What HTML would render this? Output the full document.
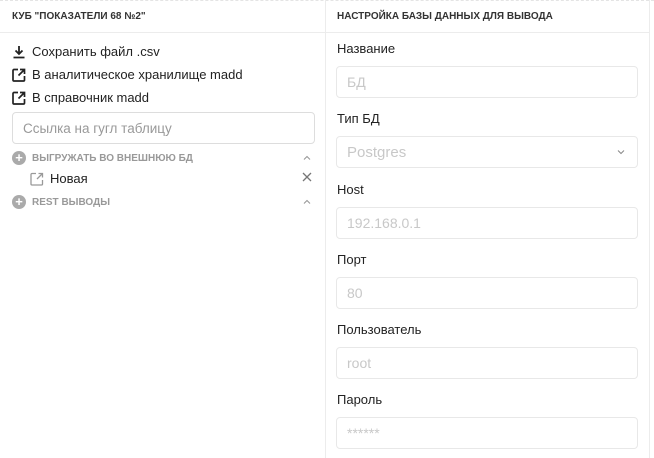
<!DOCTYPE html><html><head><meta charset="utf-8"><style>
*{box-sizing:border-box;margin:0;padding:0}
body{width:654px;height:458px;background:#fff;font-family:"Liberation Sans","DejaVu Sans",sans-serif;color:#222;position:relative;overflow:hidden}
.top{position:absolute;left:0;right:0;top:0;border-top:1px dashed #e4e4e4}
.vl{position:absolute;top:0;bottom:0;width:1px;background:#ececec}
.hl{position:absolute;top:32px;height:1px;background:#ececec}
.h{position:absolute;top:11px;font-size:10px;font-weight:bold;color:#333}
.it{position:absolute;left:12px;font-size:13px;color:#222;display:flex;align-items:center}
.it svg{margin-right:6px}
.inp{position:absolute;border:1px solid #e8e8e8;border-radius:4px;height:32px;font-size:14px;color:#c8c8c8;padding:0 10px;display:flex;align-items:center}
.sec{position:absolute;left:12px;font-size:10px;font-weight:bold;color:#999;display:flex;align-items:center}
.dot{width:14px;height:14px;border-radius:50%;background:#aaa;color:#fff;font-size:13px;line-height:14px;text-align:center;margin-right:6px}
.lab{position:absolute;left:337px;font-size:13px;color:#222}
.car{position:absolute;left:303px}
</style></head><body>
<div class="top"></div>
<div class="vl" style="left:325px"></div>
<div class="vl" style="left:649px"></div>
<div class="hl" style="left:0;width:325px"></div>
<div class="hl" style="left:326px;width:323px"></div>
<div class="h" style="left:12px">КУБ "ПОКАЗАТЕЛИ 68 №2"</div>
<div class="h" style="left:337px">НАСТРОЙКА БАЗЫ ДАННЫХ ДЛЯ ВЫВОДА</div>

<div class="it" style="top:44px"><svg width="14" height="14" viewBox="0 0 14 14"><path d="M7 1v8M3.5 5.5L7 9l3.5-3.5M1.5 12.5h11" stroke="#222" stroke-width="1.8" fill="none"/></svg>Сохранить файл .csv</div>
<div class="it" style="top:67px"><svg width="14" height="14" viewBox="0 0 14 14"><path d="M6 1.5H2a1 1 0 0 0-1 1V12a1 1 0 0 0 1 1h9.5a1 1 0 0 0 1-1V8M8 1.5h4.5V6M12.5 1.5L6.5 7.5" stroke="#222" stroke-width="1.7" fill="none"/></svg>В аналитическое хранилище madd</div>
<div class="it" style="top:90px"><svg width="14" height="14" viewBox="0 0 14 14"><path d="M6 1.5H2a1 1 0 0 0-1 1V12a1 1 0 0 0 1 1h9.5a1 1 0 0 0 1-1V8M8 1.5h4.5V6M12.5 1.5L6.5 7.5" stroke="#222" stroke-width="1.7" fill="none"/></svg>В справочник madd</div>
<div class="inp" style="left:12px;top:112px;width:303px;color:#999;font-size:13.5px;border-color:#ddd">Ссылка на гугл таблицу</div>
<div class="sec" style="top:151px"><span class="dot">+</span>ВЫГРУЖАТЬ ВО ВНЕШНЮЮ БД</div>
<svg class="car" style="top:155px" width="8" height="6" viewBox="0 0 8 6"><path d="M1 4.5l3-3 3 3" stroke="#999" stroke-width="1.1" fill="none"/></svg>
<div class="it" style="left:30px;top:171px"><svg width="14" height="14" viewBox="0 0 14 14"><path d="M6 1.5H2a1 1 0 0 0-1 1V12a1 1 0 0 0 1 1h9.5a1 1 0 0 0 1-1V8M8.5 1.5h4V5.5M12.5 1.5L7 7" stroke="#999" stroke-width="1.3" fill="none"/></svg>Новая</div>
<svg style="position:absolute;left:302px;top:172px" width="10" height="10" viewBox="0 0 10 10"><path d="M1 1l8 8M9 1l-8 8" stroke="#777" stroke-width="1.3"/></svg>
<div class="sec" style="top:195px"><span class="dot">+</span>REST ВЫВОДЫ</div>
<svg class="car" style="top:199px" width="8" height="6" viewBox="0 0 8 6"><path d="M1 4.5l3-3 3 3" stroke="#999" stroke-width="1.1" fill="none"/></svg>

<div class="lab" style="top:41px">Название</div>
<div class="inp" style="left:336px;top:66px;width:302px">БД</div>
<div class="lab" style="top:111px">Тип БД</div>
<div class="inp" style="left:336px;top:136px;width:302px;font-size:15px">Postgres</div>
<svg style="position:absolute;left:617px;top:149px" width="8" height="6" viewBox="0 0 8 6"><path d="M1 1.5l3 3 3-3" stroke="#888" stroke-width="1" fill="none"/></svg>
<div class="lab" style="top:182px">Host</div>
<div class="inp" style="left:336px;top:207px;width:302px">192.168.0.1</div>
<div class="lab" style="top:252px">Порт</div>
<div class="inp" style="left:336px;top:277px;width:302px">80</div>
<div class="lab" style="top:322px">Пользователь</div>
<div class="inp" style="left:336px;top:347px;width:302px">root</div>
<div class="lab" style="top:392px">Пароль</div>
<div class="inp" style="left:336px;top:417px;width:302px">******</div>
</body></html>
